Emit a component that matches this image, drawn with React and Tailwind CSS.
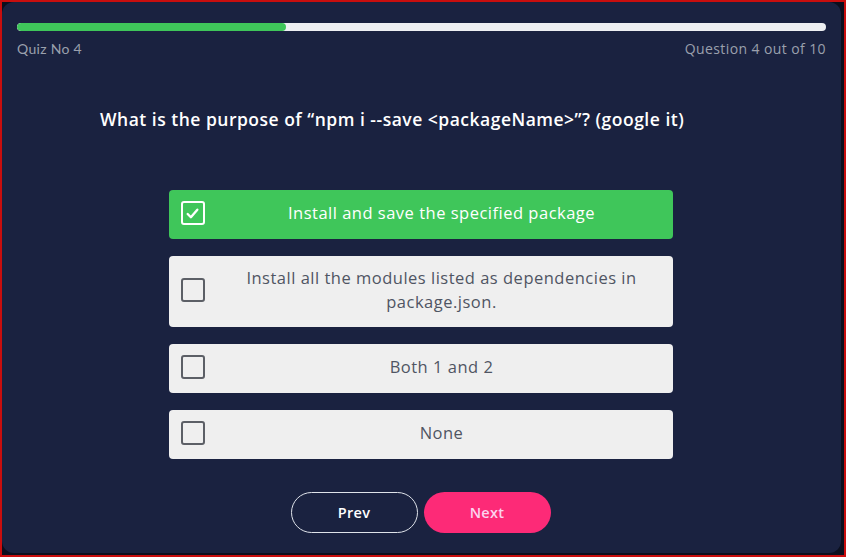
import React from "react";

const options = [
  "Install and save the specified package",
  "Install all the modules listed as dependencies in package.json.",
  "Both 1 and 2",
  "None",
];

function Check({ checked }) {
  if (checked) {
    return (
      <div className="w-6 h-6 shrink-0 rounded-[3px] border-2 border-white flex items-center justify-center">
        <svg width="15" height="15" viewBox="0 0 14 14" fill="none">
          <path d="M2.5 7.5 L5.5 10.5 L11.5 3.5" stroke="white" strokeWidth="2.2" strokeLinecap="round" strokeLinejoin="round" />
        </svg>
      </div>
    );
  }
  return <div className="w-6 h-6 shrink-0 rounded-[3px] border-[2.5px] border-[#5c5f66]" />;
}

export default function App() {
  return (
    <div
      className="w-[846px] h-[557px] border-2 border-[#c80e0e] bg-[#0b0f1e] flex flex-col"
      style={{ fontFamily: "'Open Sans', 'Noto Sans', sans-serif" }}
    >
      <div className="flex-1 mr-[3px] mb-[2px] rounded-[12px] bg-[#1a2240] px-[15px] pt-[21px] flex flex-col">
        <div className="h-2 w-full rounded-full bg-[#eef0f3] overflow-hidden">
          <div className="h-full w-[33.3%] rounded-full bg-[#3fc65a]" />
        </div>
        <div className="mt-[9px] flex justify-between items-center text-[14px] text-[#9aa0ad] leading-[18px]">
          <span className="tracking-[0.3px]" style={{ fontFamily: "Lato, sans-serif" }}>Quiz No 4</span>
          <span className="tracking-[0.4px]">Question 4 out of 10</span>
        </div>
        <div className="mt-[49px] pl-[83px] text-white font-semibold text-[17.5px] leading-[24px] tracking-[0.5px]">
          What is the purpose of “npm i --save &lt;packageName&gt;”? (google it)
        </div>
        <div className="mt-[59px] pr-[2px] flex flex-col items-center gap-[17px]">
          {options.map((o, i) => {
            const sel = i === 0;
            return (
              <div
                key={i}
                className={
                  "w-[504px] flex items-center rounded-[4px] pl-3 pt-[10px] pb-[13px] min-h-[49px] " +
                  (sel ? "bg-[#3fc65a] text-white" : "bg-[#efefef] text-[#4f5563]")
                }
              >
                <Check checked={sel} />
                <div className="flex-1 text-center text-[16.5px] leading-[24px] tracking-[0.5px] pl-[19px] pr-[13px]">{o}</div>
              </div>
            );
          })}
        </div>
        <div className="mt-[33px] flex justify-center gap-[6px] ml-[-2px]">
          <button className="w-[127px] h-[41px] rounded-full border border-[#dfe3ea] text-white text-[14.5px] font-semibold tracking-[0.3px]">
            Prev
          </button>
          <button className="w-[127px] h-[41px] rounded-full bg-[#fd2a77] text-[#fcd3ee] text-[14.5px] font-semibold tracking-[0.3px]">
            Next
          </button>
        </div>
      </div>
    </div>
  );
}
